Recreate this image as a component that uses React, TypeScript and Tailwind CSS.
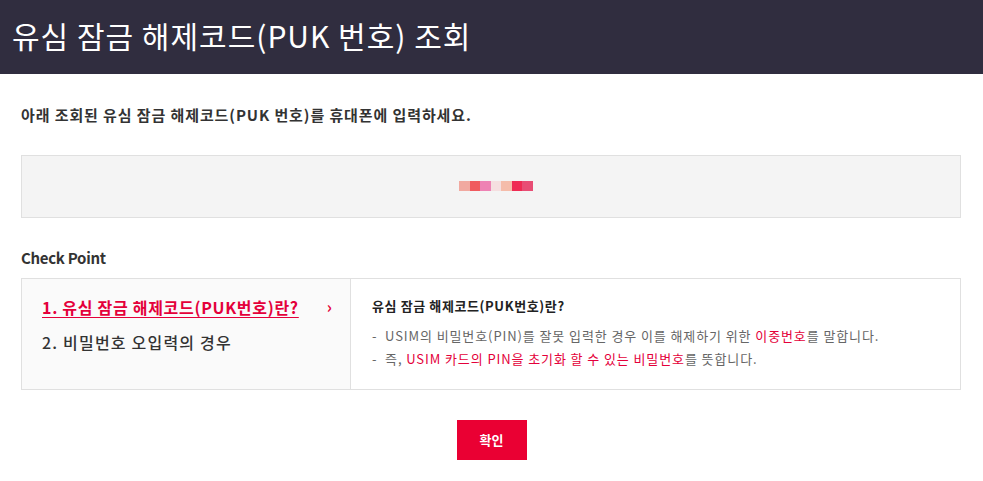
import React from 'react';

const pukBlocks = ['#f1a9a0', '#f05a5e', '#ee82b4', '#f5dfe0', '#f5bcaa', '#ef2b53', '#e84d74'];

const font = { fontFamily: '"Noto Sans CJK KR", "Noto Sans", sans-serif' };

export default function App() {
  return (
    <div className="w-[983px] h-[481px] bg-white text-[#333]" style={font}>
      <header className="h-[74px] bg-[#302d3f] flex items-center px-[12px]">
        <h1 className="text-white text-[30px] font-normal leading-none tracking-[1px] -mt-[4px]">
          유심 잠금 해제코드(PUK 번호) 조회
        </h1>
      </header>

      <div className="px-[21px]">
        <p className="mt-[30px] text-[15px] font-bold text-[#333] leading-[22px] tracking-[0.9px]">
          아래 조회된 유심 잠금 해제코드(PUK 번호)를 휴대폰에 입력하세요.
        </p>

        <div className="mt-[29px] h-[63px] w-[940px] bg-[#f4f4f4] border border-[#e0e0e0] flex items-center justify-center">
          <div className="flex ml-[10px] -mt-[2px]">
            {pukBlocks.map((c, i) => (
              <span key={i} className="w-[10.5px] h-[10px]" style={{ backgroundColor: c }} />
            ))}
          </div>
        </div>

        <h2 className="mt-[29px] text-[15px] font-bold text-[#333] leading-[22px] tracking-[-0.3px]">Check Point</h2>

        <div className="mt-[9px] w-[940px] h-[112px] border border-[#e0e0e0] flex">
          <div className="w-[329px] bg-[#fafafa] border-r border-[#e0e0e0] pl-[20px] pr-[18px] pt-[16px]">
            <div className="flex items-center justify-between">
              <a className="text-[16px] font-bold text-[#e4003a] underline underline-offset-[3px] tracking-[0.7px] leading-[24px]">
                1. 유심 잠금 해제코드(PUK번호)란?
              </a>
              <span className="text-[#e4003a] text-[16px] font-bold leading-none -mt-[2px]">›</span>
            </div>
            <p className="mt-[11px] text-[16px] font-medium text-[#333] tracking-[1.2px] leading-[24px]">
              2. 비밀번호 오입력의 경우
            </p>
          </div>
          <div className="flex-1 pl-[21px] pt-[17px]">
            <p className="text-[13px] font-bold text-[#222] leading-[20px] tracking-[0.6px]">유심 잠금 해제코드(PUK번호)란?</p>
            <p className="mt-[10px] text-[13px] text-[#666] leading-[20px] tracking-[0.9px]">
              -&nbsp; USIM의 비밀번호(PIN)를 잘못 입력한 경우 이를 해제하기 위한{' '}
              <span className="text-[#e4003a]">이중번호</span>를 말합니다.
            </p>
            <p className="mt-[3px] text-[13px] text-[#666] leading-[20px] tracking-[0.9px]">
              -&nbsp; 즉, <span className="text-[#e4003a]">USIM 카드의 PIN을 초기화 할 수 있는 비밀번호</span>를 뜻합니다.
            </p>
          </div>
        </div>

        <div className="mt-[30px] flex justify-center">
          <button className="w-[70px] h-[40px] bg-[#ea0033] text-white text-[13px] font-bold">확인</button>
        </div>
      </div>
    </div>
  );
}
